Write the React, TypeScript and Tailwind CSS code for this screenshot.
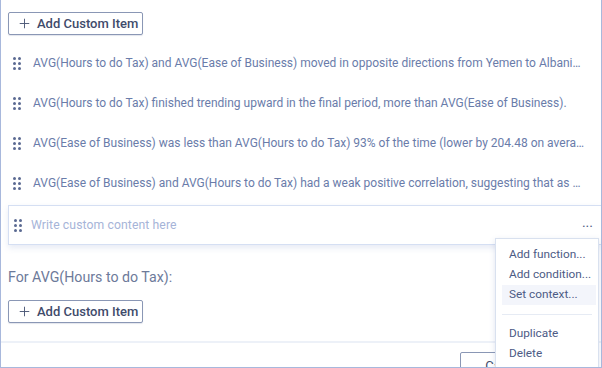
import { Plus } from "lucide-react"

const items = [
  "AVG(Hours to do Tax) and AVG(Ease of Business) moved in opposite directions from Yemen to Albania over the selected period.",
  "AVG(Hours to do Tax) finished trending upward in the final period, more than AVG(Ease of Business).",
  "AVG(Ease of Business) was less than AVG(Hours to do Tax) 93% of the time (lower by 204.48 on average).",
  "AVG(Ease of Business) and AVG(Hours to do Tax) had a weak positive correlation, suggesting that as one increases so does the other.",
]

function Grip() {
  return (
    <div className="grid grid-cols-2 gap-x-[2px] gap-y-[2px] w-[8px] shrink-0">
      {Array.from({ length: 6 }).map((_, i) => (
        <span key={i} className="w-[3px] h-[3px] rounded-full bg-[#5b6a92]" />
      ))}
    </div>
  )
}

function AddButton() {
  return (
    <button className="flex items-center gap-[5px] h-[23px] w-[135px] pl-[8px] whitespace-nowrap border border-[#8a97b5] rounded-[2px] text-[13px] font-medium text-[#3f4b6b] bg-white shadow-[0_1px_1px_rgba(60,80,130,0.15)]">
      <Plus className="w-[15px] h-[15px] text-[#4a5675]" strokeWidth={1.5} />
      Add Custom Item
    </button>
  )
}

export default function App() {
  return (
    <div
      className="relative w-[602px] h-[368px] overflow-hidden bg-white border-l border-r border-b border-[#a8b8dc]"
      style={{ fontFamily: "Roboto, 'Noto Sans', sans-serif" }}
    >
      <div className="pl-[7px] pt-[12px]">
        <AddButton />
      </div>

      <div className="mt-[8px] pl-[7px]">
        {items.map((text, i) => (
          <div key={i} className="flex items-center h-10 pl-[5px] pr-[15px]">
            <Grip />
            <p className="ml-[12px] truncate text-[12px] text-[#6a7caa]">{text}</p>
          </div>
        ))}

        <div className="mt-[2px] flex items-center h-10 pl-[5px] pr-[8px] border border-r-0 border-[#d5dff3] shadow-[0_3px_6px_rgba(120,145,200,0.18)]">
          <Grip />
          <span className="ml-[9px] flex-1 text-[12.2px] tracking-[0.1px] text-[#a6b4d8]">Write custom content here</span>
          <span className="text-[14px] leading-none text-[#4e5d85] -mt-[6px]">...</span>
        </div>

        <p className="mt-[22px] text-[14.2px] text-[#6d7a9a]">For AVG(Hours to do Tax):</p>

        <div className="mt-[12px]">
          <AddButton />
        </div>
      </div>

      <div className="mt-[18px] border-t-2 border-[#edf1f8] flex justify-end gap-2 pr-[8px] pt-[9px]">
        <button className="h-[26px] px-[24px] border border-[#8a97b5] rounded-[2px] text-[13px] text-[#3f4b6b]">Cancel</button>
        <button className="h-[26px] px-[8px] border border-[#8a97b5] rounded-[2px] text-[13px] text-[#3f4b6b]">OK</button>
      </div>

      <div className="absolute left-[494px] top-[238px] w-[104px] h-[140px] bg-white border border-[#d9e1ef] shadow-[0_2px_6px_rgba(100,120,170,0.2)] pt-[6px] text-[11.8px] text-[#4d5b85] whitespace-nowrap">
        <div className="h-[20px] flex items-center pl-[13px]">Add function...</div>
        <div className="h-[20px] flex items-center pl-[13px]">Add condition...</div>
        <div className="h-[20px] flex items-center pl-[7px] ml-[6px] mr-[2px] bg-[#f3f5fb]">Set context...</div>
        <div className="mx-[6px] my-[9px] border-t border-[#e6ebf4]" />
        <div className="h-[20px] flex items-center pl-[13px]">Duplicate</div>
        <div className="h-[20px] flex items-center pl-[13px]">Delete</div>
      </div>
    </div>
  )
}
